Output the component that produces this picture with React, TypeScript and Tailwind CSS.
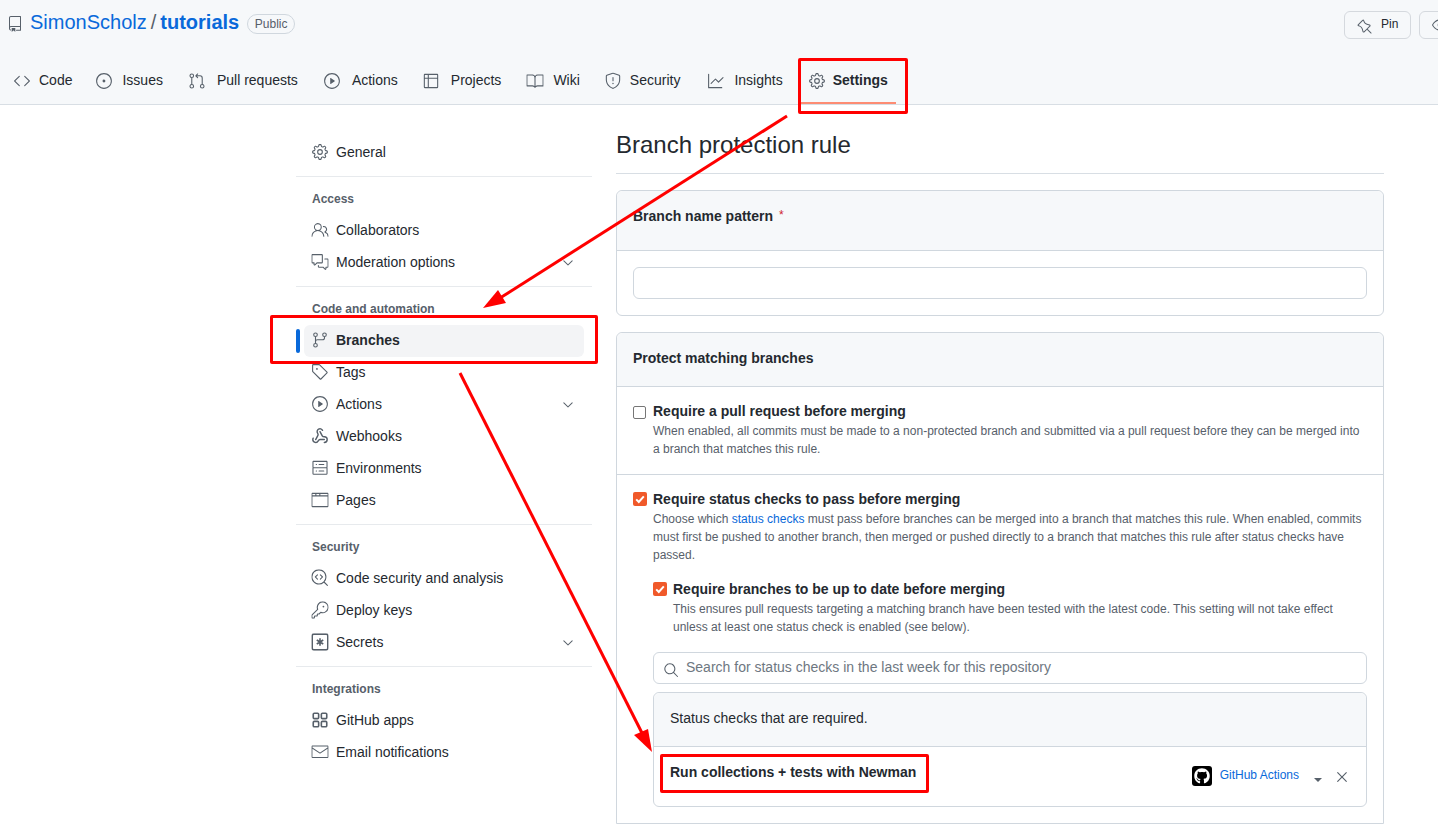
import {
  GoRepo,
  GoCode,
  GoIssueOpened,
  GoGitPullRequest,
  GoPlay,
  GoTable,
  GoBook,
  GoShield,
  GoGraph,
  GoGear,
  GoPeople,
  GoCommentDiscussion,
  GoGitBranch,
  GoTag,
  GoServer,
  GoBrowser,
  GoCodescan,
  GoKey,
  GoMail,
  GoChevronDown,
  GoSearch,
  GoX,
  GoPin,
  GoEye,
} from 'react-icons/go';
import { FaGithub } from 'react-icons/fa';
import { LuWebhook } from 'react-icons/lu';

type IconProps = { className?: string };
type Icon = (props: IconProps) => React.ReactNode;

function KeyAsteriskIcon({ className }: IconProps) {
  return (
    <svg viewBox="0 0 16 16" className={className} fill="none" stroke="currentColor">
      <rect x="0.75" y="0.75" width="14.5" height="14.5" rx="1.5" strokeWidth="1.5" />
      <path d="M8 4.5v7M5 6.2l6 3.6M11 6.2l-6 3.6" strokeWidth="1.5" />
    </svg>
  );
}

function AppsIcon({ className }: IconProps) {
  return (
    <svg viewBox="0 0 16 16" className={className} fill="none" stroke="currentColor" strokeWidth="1.5">
      <rect x="1.75" y="1.75" width="5" height="5" rx="1" />
      <rect x="9.25" y="1.75" width="5" height="5" rx="1" />
      <rect x="1.75" y="9.25" width="5" height="5" rx="1" />
      <rect x="9.25" y="9.25" width="5" height="5" rx="1" />
    </svg>
  );
}

// spacing differs slightly per tab in the original, so it is kept with the tab
const tabs: { label: string; icon: Icon; spacing: string; active?: boolean }[] = [
  { label: 'Code', icon: GoCode, spacing: 'gap-[9px] mr-[8px]' },
  { label: 'Issues', icon: GoIssueOpened, spacing: 'gap-[10px] mr-[10px]' },
  { label: 'Pull requests', icon: GoGitPullRequest, spacing: 'gap-[12px] mr-[10px]' },
  { label: 'Actions', icon: GoPlay, spacing: 'gap-[12px] mr-[9px]' },
  { label: 'Projects', icon: GoTable, spacing: 'gap-[12px] mr-[10px]' },
  { label: 'Wiki', icon: GoBook, spacing: 'gap-[10px] mr-[9px]' },
  { label: 'Security', icon: GoShield, spacing: 'gap-[9px] mr-[12px]' },
  { label: 'Insights', icon: GoGraph, spacing: 'gap-[10px] mr-[10px]' },
  { label: 'Settings', icon: GoGear, spacing: 'gap-[8px]', active: true },
];

type NavItem = { label: string; icon: Icon; chevron?: boolean; active?: boolean };

const sections: { title?: string; items: NavItem[] }[] = [
  { items: [{ label: 'General', icon: GoGear }] },
  {
    title: 'Access',
    items: [
      { label: 'Collaborators', icon: GoPeople },
      { label: 'Moderation options', icon: GoCommentDiscussion, chevron: true },
    ],
  },
  {
    title: 'Code and automation',
    items: [
      { label: 'Branches', icon: GoGitBranch, active: true },
      { label: 'Tags', icon: GoTag },
      { label: 'Actions', icon: GoPlay, chevron: true },
      { label: 'Webhooks', icon: LuWebhook },
      { label: 'Environments', icon: GoServer },
      { label: 'Pages', icon: GoBrowser },
    ],
  },
  {
    title: 'Security',
    items: [
      { label: 'Code security and analysis', icon: GoCodescan },
      { label: 'Deploy keys', icon: GoKey },
      { label: 'Secrets', icon: KeyAsteriskIcon, chevron: true },
    ],
  },
  {
    title: 'Integrations',
    items: [
      { label: 'GitHub apps', icon: AppsIcon },
      { label: 'Email notifications', icon: GoMail },
    ],
  },
];

function OrangeCheck() {
  return (
    <span className="mt-[2px] flex h-[14px] w-[14px] shrink-0 items-center justify-center rounded-[2px] bg-[#f0592a]">
      <svg viewBox="0 0 14 14" className="h-[14px] w-[14px]" fill="none">
        <path d="M3.2 7.4 L5.8 10 L10.8 4.4" stroke="#fff" strokeWidth="2" />
      </svg>
    </span>
  );
}

function Sidebar() {
  return (
    <aside className="w-[296px] shrink-0 pt-[31px]">
      {sections.map((section, i) => (
        <div key={i} className={i > 0 ? 'mt-2 border-t border-[#e7eaed] pt-[13px]' : ''}>
          {section.title && (
            <div className="mb-[6px] h-[18px] pl-4 text-[12px] leading-[18px] font-bold text-[#57606a]">
              {section.title}
            </div>
          )}
          {section.items.map((item) => {
            const ItemIcon = item.icon;
            return (
              <div key={item.label} className="relative ml-2 flex h-8 w-[280px] items-center rounded-md">
                {item.active && (
                  <>
                    <span className="absolute inset-x-0 top-px bottom-[-1px] rounded-md bg-[#f3f4f6]" />
                    <span className="absolute top-[5px] left-[-8px] h-6 w-1 rounded-md bg-[#0969da]" />
                  </>
                )}
                <ItemIcon className="relative ml-2 h-4 w-4 scale-[1.08] text-[#57606a]" />
                <span className={`relative ml-2 text-[14px] text-[#24292f] ${item.active ? 'font-bold' : ''}`}>
                  {item.label}
                </span>
                {item.chevron && <GoChevronDown className="absolute top-[9px] right-2 h-4 w-4 text-[#57606a]" />}
              </div>
            );
          })}
        </div>
      ))}
    </aside>
  );
}

function StatusChecks() {
  return (
    <div className="mt-2 rounded-md border border-[#d0d7de]">
      <div className="flex h-[54px] items-center rounded-t-md border-b border-[#d0d7de] bg-[#f6f8fa] px-4 pb-[2px] text-[14px] text-[#24292f]">
        Status checks that are required.
      </div>
      <div className="flex h-[59px] justify-between pr-4 pl-4">
        <div className="pt-[16px] text-[14px] leading-[18px] font-bold text-[#24292f]">
          Run collections + tests with Newman
        </div>
        <div className="flex items-center">
          <span className="mt-[-1px] flex h-5 w-5 items-center justify-center rounded-[3px] bg-black">
            <FaGithub className="h-4 w-4 text-white" />
          </span>
          <a className="mt-[-3px] ml-2 text-[12px] text-[#0969da]">GitHub Actions</a>
          <span className="mt-[7px] ml-[15px] h-0 w-0 border-x-[4px] border-t-[4px] border-x-transparent border-t-[#57606a]" />
          <span className="ml-[12px] flex h-[16px] w-[16px] items-center justify-center rounded-md">
            <GoX className="h-[18px] w-[18px] shrink-0 text-[#57606a]" />
          </span>
        </div>
      </div>
    </div>
  );
}

function Main() {
  return (
    <main className="w-[768px] shrink-0">
      <h2 className="flex h-[69px] items-end border-b border-[#d8dee4] pb-[10px] text-[24px] leading-[36px] font-normal text-[#24292f]">
        Branch protection rule
      </h2>

      <section className="mt-4 rounded-md border border-[#d0d7de]">
        <div className="h-[60px] rounded-t-md border-b border-[#d0d7de] bg-[#f6f8fa] px-4 pt-[15px] text-[14px] leading-[18px] font-bold text-[#24292f]">
          Branch name pattern <span className="ml-[2px] align-[2px] text-[12px] font-normal text-[#cf222e]">*</span>
        </div>
        <div className="p-4">
          <div className="h-8 rounded-md border border-[#d0d7de] bg-white" />
        </div>
      </section>

      <section className="mt-4 rounded-t-md border border-[#d0d7de]">
        <div className="flex h-[54px] items-center rounded-t-md border-b border-[#d0d7de] bg-[#f6f8fa] px-4 pb-[2px] text-[14px] font-bold text-[#24292f]">
          Protect matching branches
        </div>

        <div className="flex gap-[6px] border-b border-[#d0d7de] px-4 pt-[15px] pb-4">
          <span className="mt-[4px] h-[13px] w-[13px] shrink-0 rounded-[2px] border border-[#767676] bg-white" />
          <div className="ml-[1px]">
            <div className="h-[18px] text-[14px] leading-[18px] font-bold text-[#24292f]">
              Require a pull request before merging
            </div>
            <p className="mt-[2px] text-[12px] leading-[18px] text-[#57606a]">
              When enabled, all commits must be made to a non-protected branch and submitted via a pull request before they can be merged into a branch that matches this rule.
            </p>
          </div>
        </div>

        <div className="flex gap-[6px] px-4 pt-[15px] pb-4">
          <OrangeCheck />
          <div className="min-w-0 flex-1">
            <div className="h-[18px] text-[14px] leading-[18px] font-bold text-[#24292f]">
              Require status checks to pass before merging
            </div>
            <p className="mt-[2px] text-[12px] leading-[18px] text-[#57606a]">
              Choose which <a className="text-[#0969da]">status checks</a> must pass before branches can be merged into a branch that matches this rule. When enabled, commits must first be pushed to another branch, then merged or pushed directly to a branch that matches this rule after status checks have passed.
            </p>

            <div className="mt-4 flex gap-[6px]">
              <OrangeCheck />
              <div>
                <div className="h-[18px] text-[14px] leading-[18px] font-bold text-[#24292f]">
                  Require branches to be up to date before merging
                </div>
                <p className="mt-[2px] text-[12px] leading-[18px] text-[#57606a]">
                  This ensures pull requests targeting a matching branch have been tested with the latest code. This setting will not take effect unless at least one status check is enabled (see below).
                </p>
              </div>
            </div>

            <div className="mt-4 flex h-8 items-center rounded-md border border-[#d0d7de] bg-white pb-[2px] pl-[9px] text-[14px] text-[#6e7781]">
              <GoSearch className="mt-[5px] h-4 w-4 text-[#57606a]" />
              <span className="ml-[7px]">Search for status checks in the last week for this repository</span>
            </div>

            <StatusChecks />
          </div>
        </div>
      </section>
    </main>
  );
}

export default function App() {
  return (
    <div className="relative h-screen overflow-hidden bg-white font-['Liberation_Sans',Arial,sans-serif]">
      <header className="h-[105px] overflow-hidden border-b border-[#d8dee4] bg-[#f6f8fa]">
        <div className="flex h-[48px] items-start pt-[11px] pl-[7px]">
          <GoRepo className="mt-[5px] h-4 w-4 text-[#57606a]" />
          <div className="mt-[-1px] ml-[7px] text-[20px] leading-[24px] text-[#0969da]">
            SimonScholz
            <span className="mx-[4px] text-[#57606a]">/</span>
            <b className="font-bold">tutorials</b>
          </div>
          <span className="mt-[3px] ml-2 flex h-5 w-[48px] items-center justify-center rounded-full border border-[#d0d7de] text-[12px] text-[#57606a]">
            Public
          </span>
          <div className="mr-[-60px] ml-auto flex gap-2">
            <div className="flex h-7 w-[67px] items-center rounded-md border border-[#d5d9de] bg-[#f6f8fa] pl-3 text-[12px] text-[#24292f]">
              <GoPin className="mt-[3px] h-4 w-4 text-[#57606a]" />
              <span className="mt-[-3px] ml-[8px]">Pin</span>
            </div>
            <div className="flex h-7 w-[79px] items-center rounded-md border border-[#d5d9de] bg-[#f6f8fa] pl-3">
              <GoEye className="h-4 w-4 text-[#57606a]" />
            </div>
          </div>
        </div>
        <nav className="flex pl-[6px]">
          {tabs.map((tab) => {
            const TabIcon = tab.icon;
            return (
              <div
                key={tab.label}
                className={`flex h-[56px] items-center border-b-2 px-2 pt-[11px] text-[14px] text-[#24292f] ${tab.spacing} ${
                  tab.active ? 'border-[#fd8c73] font-bold' : 'border-transparent'
                }`}
              >
                <TabIcon className="h-4 w-4 scale-[1.08] text-[#57606a]" />
                {tab.label}
              </div>
            );
          })}
        </nav>
      </header>

      <div className="flex gap-6 pl-[296px]">
        <Sidebar />
        <Main />
      </div>

      {/* red annotations drawn on top of the screenshot */}
      <div className="absolute top-[58px] left-[798px] h-[56px] w-[110px] rounded-[2px] border-[3px] border-[#ff0000]" />
      <div className="absolute top-[315px] left-[270px] h-[49px] w-[328px] rounded-[2px] border-[3px] border-[#ff0000]" />
      <div className="absolute top-[754px] left-[660px] h-[39px] w-[269px] rounded-[2px] border-[3px] border-[#ff0000]" />
      <svg className="pointer-events-none absolute top-0 left-0 h-[827px] w-[1438px]" viewBox="0 0 1438 827">
        <line x1="787" y1="116" x2="500" y2="298" stroke="#ff0000" strokeWidth="3" />
        <polygon points="483,308 498,290 506,303" fill="#ff0000" />
        <line x1="460" y1="373" x2="642" y2="733" stroke="#ff0000" strokeWidth="3" />
        <polygon points="652,752 634,735 648,729" fill="#ff0000" />
      </svg>
    </div>
  );
}
